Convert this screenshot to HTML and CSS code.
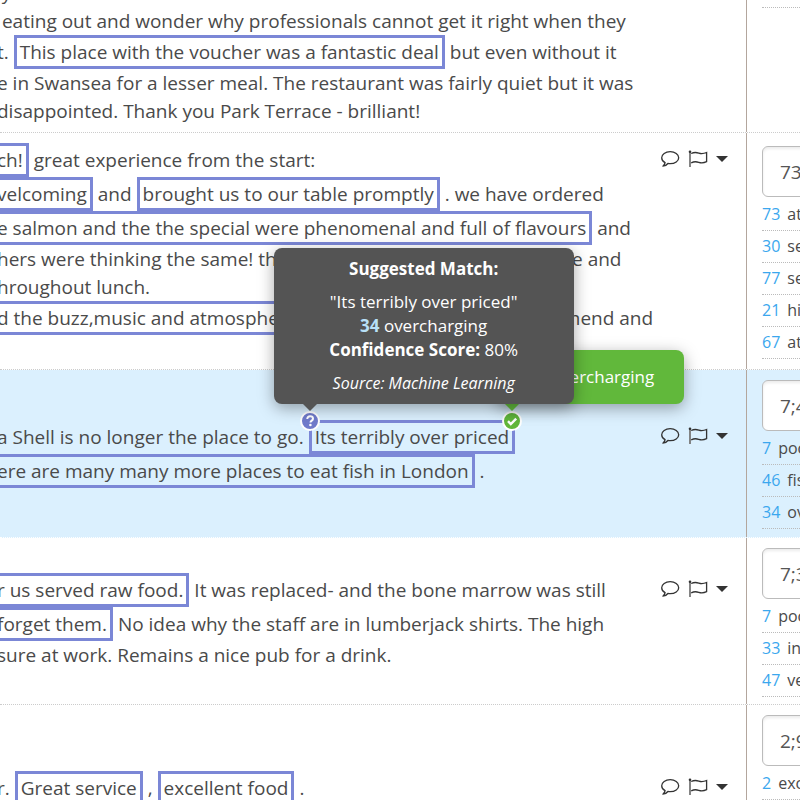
FILE: index.html
```
<!DOCTYPE html>
<html lang="en">
<head>
<meta charset="utf-8">
<title>Review coding</title>
<link rel="stylesheet" href="styles.css">
</head>
<body>
<svg class="sprite" aria-hidden="true">
  <symbol id="comment" viewBox="0 0 20 18"><path d="M10.200 1.700C5.400 1.700 1.700 4.300 1.700 7.700c0 2.100 1.300 3.900 3.400 5-.2 1.400-1 2.500-2.200 3.500 2-.1 3.700-1 5-2.700 .7.100 1.500.2 2.300.2 4.800 0 8.500-2.700 8.500-6s-3.700-6-8.500-6z" fill="none" stroke="currentColor" stroke-width="1.300" stroke-linejoin="round"/></symbol>
  <symbol id="flag" viewBox="0 0 20 18"><path d="M2 2v15" stroke="#777" stroke-width="1.800" fill="none"/><circle cx="2" cy="1.700" r="1.300" fill="currentColor"/><path d="M3.200 3.500c2.800-1.400 5-1.300 7.600-.4 2.700.9 4.700.7 7.800-.6v9.200c-3 1.400-5.200 1.500-7.900.6-2.600-.9-4.700-.9-7.500.5" fill="none" stroke="currentColor" stroke-width="1.300"/></symbol>
  <symbol id="caret" viewBox="0 0 12 6"><path d="M0 0h12L6 6z" fill="currentColor"/></symbol>
</svg>
<main class="reviews">
  <article class="review review-first">
    <div class="review-body">
      <div class="review-text">
        <p>ly. The meal was one of the best I have ever eaten and we do eat out</p>
        <p> eating out and wonder why professionals cannot get it right when they</p>
        <p>t. <mark>This place with the voucher was a fantastic deal</mark> but even without it</p>
        <p>e in Swansea for a lesser meal. The restaurant was fairly quiet but it was</p>
        <p>disappointed. Thank you Park Terrace - brilliant!</p>
      </div>
    </div>
    <div class="review-codes"><ul class="codes"><li></li></ul></div>
  </article>

  <article class="review review-long">
    <div class="review-body">
      <div class="review-text">
        <p><mark class="cut">ch!</mark> great experience from the start:</p>
        <p><mark class="cut">velcoming</mark> and <mark>brought us to our table promptly</mark> . we have ordered</p>
        <p><mark class="cut">e salmon and the the special were phenomenal and full of flavours</mark> and</p>
        <p>hers were thinking the same! the service was always very attentive and</p>
        <p>hroughout lunch.</p>
        <p><mark class="cut">d the buzz,music and atmosphere</mark> . We would absolutely recommend and</p>
      </div>
      <div class="actions">
        <button aria-label="Comment"><svg class="icon"><use href="#comment"/></svg></button>
        <button aria-label="Flag"><svg class="icon"><use href="#flag"/></svg></button>
        <button aria-label="More"><svg class="caret"><use href="#caret"/></svg></button>
      </div>
    </div>
    <div class="review-codes">
      <input type="text" aria-label="Codes" value="73;30">
      <ul class="codes"><li><b>73</b>at</li><li><b>30</b>se</li><li><b>77</b>se</li><li><b>21</b>hi</li><li><b>67</b>at</li></ul>
    </div>
  </article>

  <article class="review review-active">
    <div class="review-body">
      <div class="review-text">
        <p>a Shell is no longer the place to go. <mark>Its terribly over priced<span class="pin pin-question"><svg viewBox="0 0 16 16"><path d="M5.300 6c0-1.700 1.100-2.700 2.800-2.700s2.900 1 2.900 2.400c0 1.900-2.500 2-2.500 3.800" fill="none" stroke="#fff" stroke-width="2"/><circle cx="8.400" cy="12" r="1.300" fill="#fff"/></svg><span class="tip tip-dark" role="tooltip"><strong class="tip-title">Suggested Match:</strong><span>"Its terribly over priced"</span><span><b>34</b> overcharging</span><span><strong>Confidence Score:</strong> 80%</span><em>Source: Machine Learning</em></span></span><span class="pin pin-check"><svg viewBox="0 0 16 16"><path d="M4 8.200l2.800 2.800L12.200 5.600" fill="none" stroke="#fff" stroke-width="2.400"/></svg><span class="tip tip-green" role="tooltip">34 overcharging</span></span></mark></p>
        <p><mark class="cut">ere are many many more places to eat fish in London</mark> .</p>
      </div>
      <div class="actions">
        <button aria-label="Comment"><svg class="icon"><use href="#comment"/></svg></button>
        <button aria-label="Flag"><svg class="icon"><use href="#flag"/></svg></button>
        <button aria-label="More"><svg class="caret"><use href="#caret"/></svg></button>
      </div>
    </div>
    <div class="review-codes">
      <input type="text" aria-label="Codes" value="7;46">
      <ul class="codes"><li><b>7</b>poo</li><li><b>46</b>fis</li><li><b>34</b>ov</li></ul>
    </div>
  </article>

  <article class="review">
    <div class="review-body">
      <div class="review-text">
        <p><mark class="cut">r us served raw food.</mark> It was replaced- and the bone marrow was still</p>
        <p><mark class="cut">forget them.</mark> No idea why the staff are in lumberjack shirts. The high</p>
        <p>sure at work. Remains a nice pub for a drink.</p>
      </div>
      <div class="actions">
        <button aria-label="Comment"><svg class="icon"><use href="#comment"/></svg></button>
        <button aria-label="Flag"><svg class="icon"><use href="#flag"/></svg></button>
        <button aria-label="More"><svg class="caret"><use href="#caret"/></svg></button>
      </div>
    </div>
    <div class="review-codes">
      <input type="text" aria-label="Codes" value="7;33">
      <ul class="codes"><li><b>7</b>poo</li><li><b>33</b>in</li><li><b>47</b>ve</li></ul>
    </div>
  </article>

  <article class="review">
    <div class="review-body">
      <div class="review-text">
        <p>r. <mark>Great service</mark> , <mark>excellent food</mark> .</p>
      </div>
      <div class="actions">
        <button aria-label="Comment"><svg class="icon"><use href="#comment"/></svg></button>
        <button aria-label="Flag"><svg class="icon"><use href="#flag"/></svg></button>
        <button aria-label="More"><svg class="caret"><use href="#caret"/></svg></button>
      </div>
    </div>
    <div class="review-codes">
      <input type="text" aria-label="Codes" value="2;9">
      <ul class="codes"><li><b>2</b>exc</li></ul>
    </div>
  </article>
</main>
</body>
</html>
```
FILE: styles.css
```
* { box-sizing: border-box; }
html { overflow: hidden; height: 100%; }
body {
  margin: 0;
  height: 100%;
  overflow: hidden;
  background: #fff;
  color: #4a4a4a;
  font-family: "Open Sans", sans-serif;
  font-size: 19px;
  line-height: 28px;
}
.sprite { position: absolute; width: 0; height: 0; }
.reviews { margin-top: -21px; }
.review {
  display: grid;
  grid-template-columns: minmax(0, 1fr) 53px;
  min-height: 167px;
  border-bottom: 1px dotted #ccc;
}
.review-first { min-height: 0; }
.review-long { min-height: 237px; }
.review-active {
  min-height: 168px;
  background: #dbf0fe;
  border-bottom-color: #fff;
}

.review-body {
  display: grid;
  grid-template-columns: minmax(0, 1fr) auto;
  align-content: center;
  border-right: 1px solid #b3a69d;
}
.review-first .review-body { padding-bottom: 7px; }
.review-long .review-body { padding-bottom: 24px; }
.review-text { margin-left: -3px; }
.review-text p { margin: 0; white-space: pre; }
mark {
  display: inline-block;
  position: relative;
  padding: 0 3px;
  border: 3px solid #7b87d6;
  background: none;
  color: inherit;
  vertical-align: top;
}
p:has(mark) { line-height: 34px; }
p mark { line-height: 28px; }
.cut { padding-left: 0; border-left: 0; }

.actions {
  display: flex;
  align-items: center;
  align-self: start;
  gap: 8px;
  height: 32px;
  margin-right: 18px;
}
button {
  display: flex;
  padding: 0;
  border: 0;
  background: none;
  color: #333;
}
.icon { width: 20px; height: 18px; }
.caret { width: 12px; height: 6px; }

.review-codes {
  padding: 10px 0 0 15px;
  overflow: hidden;
}
.review-first .review-codes { padding-top: 0; }
.review-long .review-codes { padding-top: 13px; }
input {
  display: block;
  width: 120px;
  height: 51px;
  padding: 0 17px;
  border: 1px solid #bbb;
  border-radius: 6px;
  background: #fff;
  box-shadow: inset 0 2px 3px rgba(0, 0, 0, .08);
  color: #555;
  font: inherit;
}
input + .codes { padding-top: 2px; }
.codes {
  margin: 0;
  padding: 0;
  list-style: none;
  font-size: 16px;
  line-height: 31px;
  white-space: nowrap;
}
.codes li {
  display: flex;
  gap: 7px;
  min-height: 29px;
  border-bottom: 1px dotted #bbb;
}
.codes b { color: #3ba7ee; font-weight: 400; }

.pin {
  position: absolute;
  top: -12px;
  display: flex;
  width: 20px;
  height: 20px;
  border: 2px solid #fff;
  border-radius: 50%;
}
.pin svg { width: 16px; height: 16px; }
.pin-question { left: -12px; background: #707bcb; z-index: 2; }
.pin-check { right: -10px; background: #61b83b; z-index: 1; }
.tip {
  position: absolute;
  bottom: 25px;
  border-radius: 8px;
  color: #fff;
  font-size: 17px;
  line-height: 24px;
  text-align: center;
  white-space: nowrap;
  box-shadow: 0 4px 16px rgba(0, 0, 0, .35);
}
.tip::after {
  content: "";
  position: absolute;
  top: 100%;
  border: 7px solid transparent;
  border-bottom: 0;
}
.tip-dark {
  left: -28px;
  display: flex;
  flex-direction: column;
  width: 300px;
  padding: 9px 16px;
  background: #545454;
}
.tip-dark::after { left: 29px; border-top-color: #545454; }
.tip-title { margin-bottom: 9px; }
.tip-dark b { color: #b8e0f7; }
.tip-dark em { margin-top: 9px; font-size: 16px; }
.tip-green {
  right: -164px;
  padding: 15px 30px;
  background: #61b83b;
}
.tip-green::after { right: 165px; border-top-color: #61b83b; }
```
